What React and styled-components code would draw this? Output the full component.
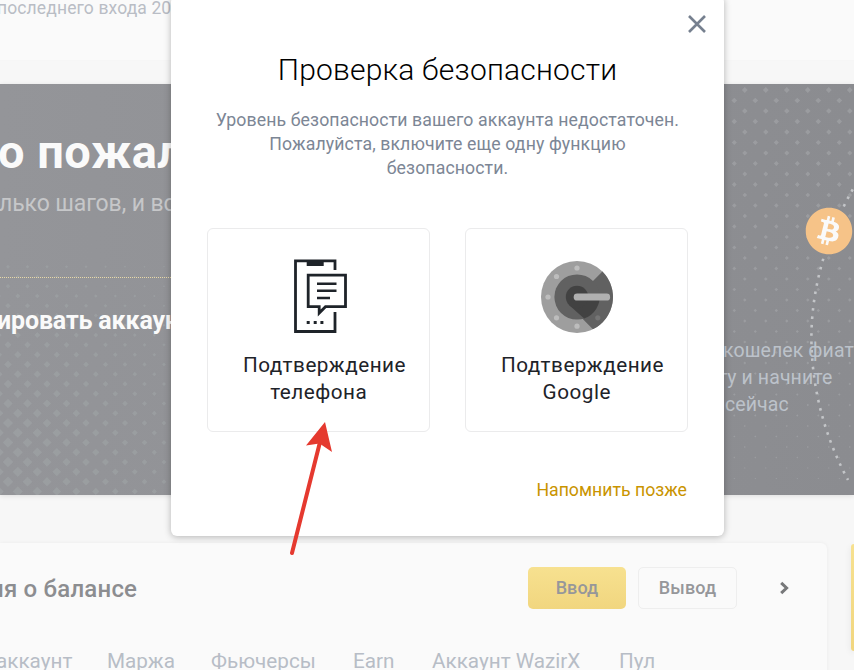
import React from "react";
import styled, { createGlobalStyle } from "styled-components";
import { FaBitcoin } from "react-icons/fa";

const tabs = [
  { name: "аккаунт", width: 74 },
  { name: "Маржа", width: 67 },
  { name: "Фьючерсы", width: 105 },
  { name: "Earn", width: 42 },
  { name: "Аккаунт WazirX", width: 150 },
  { name: "Пул", width: 36 },
];

const diamond = (x, y, r) => `M${x - r} ${y}l${r} ${-r}l${r} ${r}l${-r} ${r}z`;

const leftDiamonds = () => {
  let d = "";
  for (let row = 0; row < 24; row++) {
    const y = 182.7 + row * 9.77;
    for (let col = 0; col < 10; col++) {
      const x = (row % 2 ? -1.7 : 8) + col * 19.5;
      const ty = Math.min(1, row / 17);
      const r = (2 + 3.4 * ty) * (1 - (0.55 * x) / 165);
      d += diamond(x, y, Math.max(r, 0.8));
    }
  }
  return d;
};

const rightDiamonds = () => {
  let d = "";
  for (let row = 0; row < 38; row++) {
    const y = 6 + row * 10.5;
    for (let col = 0; col < 7; col++) {
      const x = (row % 2 ? 10.3 : 20.8) + col * 21;
      d += diamond(x, y, 2.9 - row * 0.057);
    }
  }
  return d;
};

const PhoneIcon = () => (
  <svg width="54" height="75" viewBox="0 0 54 75" fill="none" stroke="#1e2329" strokeWidth="2.8">
    <path d="M41 11V1.8H1.5V72.5H41V53" />
    <path d="M12.7 1h17v6h-17z" fill="#1e2329" stroke="none" />
    <path d="M14.2 16.2H51.5V47.7H31.5L25.2 54V47.7H14.2z" />
    <path d="M23 24.7H42.5M23 31.7H42.5M23 39H36" strokeWidth="2.6" />
    <path d="M12.7 62h3v3h-3zM19.7 62h3v3h-3zM26.4 62h3v3h-3z" fill="#1e2329" stroke="none" />
  </svg>
);

const AuthenticatorIcon = () => (
  <svg width="72" height="72" viewBox="-36 -36 72 72">
    <circle r="36" fill="#9e9e9e" />
    <path d="M25.4 -25.5L16 -16L0 0L-8 8L15.9 32.3A36 36 0 0 0 25.4 -25.5z" fill="#616161" />
    <circle r="22.6" fill="#616161" />
    <path d="M11 -3H22.4A22.6 22.6 0 0 1 7.1 21.5L-8 8z" fill="#424242" />
    <circle r="11.2" fill="#424242" />
    <rect x="-3.3" y="-3.4" width="36.4" height="7" rx="3.4" fill="#b0b0b0" />
    <g fill="#bdbdbd">
      <circle cy="-29" r="2.6" />
      <circle cx="-20.5" cy="-20.5" r="2.6" />
      <circle cx="-29" r="2.6" />
      <circle cx="-20.5" cy="20.8" r="2.6" />
      <circle cy="29.2" r="2.6" />
    </g>
    <circle cx="20.8" cy="20.8" r="2.6" fill="#757575" />
  </svg>
);

const App = () => {
  return (
    <>
      <GlobalStyle />
      <Page>
        <TopBar>
          <LastLogin>последнего входа 20</LastLogin>
        </TopBar>
        <Banner>
          <BannerPattern width="171" height="411">
            <path d={leftDiamonds()} fill="#a1a6a8" fillOpacity="0.55" />
          </BannerPattern>
          <RightPattern width="130" height="411">
            <path d={rightDiamonds()} fill="#a5a6aa" fillOpacity="0.6" />
            <path
              d="M133 98C102 150 87 206 87.4 256C88 306 101 353 124 396"
              fill="none"
              stroke="#c3c5c8"
              strokeWidth="2.6"
              strokeDasharray="2.6 5.8"
            />
          </RightPattern>
          <Coin>
            <FaBitcoin size={48} />
          </Coin>
          <BannerMain>
            <BannerTitle>о пожал</BannerTitle>
            <BannerText>лько шагов, и вс</BannerText>
            <Divider />
            <BannerStep>ировать аккаун</BannerStep>
          </BannerMain>
          <BannerSide>
            <SideLine>кошелек фиат</SideLine>
            <SideLine $shift={-4}>гу и начните</SideLine>
            <SideLine $shift={2}>сейчас</SideLine>
          </BannerSide>
        </Banner>
        <Bottom>
          <Balance>
            <BalanceHead>
              <BalanceTitle>ия о балансе</BalanceTitle>
              <Button $primary $width={98}>
                Ввод
              </Button>
              <Button $width={99}>Вывод</Button>
              <Chevron width="10" height="14" viewBox="0 0 10 14">
                <path d="M2.2 1.8L7.6 7L2.2 12.2" fill="none" stroke="#77787a" strokeWidth="3" />
              </Chevron>
            </BalanceHead>
            <Tabs>
              {tabs.map((tab) => (
                <Tab key={tab.name} $width={tab.width}>
                  {tab.name}
                </Tab>
              ))}
            </Tabs>
          </Balance>
          <SideCard />
        </Bottom>

        <Overlay>
          <Modal>
            <Close width="18" height="18" viewBox="0 0 18 18">
              <path d="M1 1L17 17M17 1L1 17" stroke="#76808f" strokeWidth="2.6" />
            </Close>
            <Title>Проверка безопасности</Title>
            <Description>
              <span>Уровень безопасности вашего аккаунта недостаточен.</span>
              <span>Пожалуйста, включите еще одну функцию</span>
              <span>безопасности.</span>
            </Description>
            <Options>
              <Option>
                <IconBox $nudge={5}>
                  <PhoneIcon />
                </IconBox>
                <Label>Подтверждение телефона</Label>
              </Option>
              <Option>
                <IconBox $nudge={1}>
                  <AuthenticatorIcon />
                </IconBox>
                <Label>Подтверждение Google</Label>
              </Option>
            </Options>
            <Later>Напомнить позже</Later>
          </Modal>
        </Overlay>

        <Arrow width="50" height="140" viewBox="0 0 50 140">
          <path d="M7 133L35 22" stroke="#e5392f" strokeWidth="4" strokeLinecap="round" />
          <path d="M40 2L21 25.5L34.5 23.5L47 32z" fill="#e5392f" />
        </Arrow>
      </Page>
    </>
  );
};

const GlobalStyle = createGlobalStyle`
  * {
    box-sizing: border-box;
  }
  body {
    margin: 0;
    font-family: Roboto, "Noto Sans", sans-serif;
  }
`;

const Page = styled.div`
  position: relative;
  width: 854px;
  height: 670px;
  overflow: hidden;
  background: #f7f7f7;
  white-space: nowrap;
`;

const TopBar = styled.header`
  height: 61px;
  background: #fafafa;
  border-bottom: 1px solid #f6f6f6;
`;

const LastLogin = styled.div`
  margin-left: -3px;
  font-size: 17.5px;
  line-height: 16px;
  letter-spacing: 0.12px;
  color: #b9bdc5;
`;

const Banner = styled.section`
  position: relative;
  display: flex;
  justify-content: space-between;
  height: 411px;
  margin-top: 23px;
  background: linear-gradient(90deg, #949599, #8b8c90);
  box-shadow: 0 1px 5px rgba(0, 0, 0, 0.1);
`;

const BannerPattern = styled.svg`
  position: absolute;
  left: 0;
  top: 0;
`;

const RightPattern = styled(BannerPattern)`
  left: 724px;
`;

const Coin = styled.div`
  position: absolute;
  left: 805px;
  top: 123px;
  width: 48px;
  height: 48px;
  border-radius: 50%;
  background: radial-gradient(#fafafa 60%, transparent 61%);
  color: #f6c388;
  z-index: 1;
`;

const BannerMain = styled.div`
  position: relative;
  width: 171px;
  padding-top: 40px;
`;

const BannerTitle = styled.h1`
  margin: 0 0 0 -2px;
  font-size: 47px;
  line-height: 56px;
  font-weight: 700;
  letter-spacing: 0.5px;
  color: #fafafa;
`;

const BannerText = styled.p`
  margin: 9px 0 0 -1px;
  font-size: 23px;
  line-height: 30px;
  letter-spacing: -0.1px;
  color: #c6c7c9;
`;

const Divider = styled.div`
  margin-top: 58px;
  border-top: 1px dotted #e8d9a8;
`;

const BannerStep = styled.div`
  margin: 28px 0 0 -3px;
  font-size: 25px;
  line-height: 30px;
  font-weight: 700;
  letter-spacing: -0.15px;
  color: #fafafa;
`;

const BannerSide = styled.div`
  position: relative;
  width: 131px;
  padding-top: 253px;
`;

const SideLine = styled.div`
  margin-left: ${(props) => props.$shift || 0}px;
  font-size: 19.5px;
  line-height: 27px;
  letter-spacing: 0.1px;
  color: #bcc2ca;
`;

const Bottom = styled.div`
  display: flex;
  justify-content: space-between;
  align-items: flex-start;
  margin-top: 48px;
`;

const Balance = styled.section`
  width: 827px;
  height: 140px;
  border-radius: 0 6px 0 0;
  background: #fafafa;
  box-shadow: 0 0 4px rgba(0, 0, 0, 0.05);
`;

const BalanceHead = styled.div`
  display: flex;
  align-items: center;
  gap: 12px;
  height: 66px;
  padding: 24px 38px 0 0;
`;

const BalanceTitle = styled.h2`
  flex: 1;
  margin: 2px 0 0 -10px;
  font-size: 24px;
  line-height: 42px;
  font-weight: 500;
  letter-spacing: 0.2px;
  color: #8c8d90;
`;

const Button = styled.button`
  width: ${(props) => props.$width}px;
  height: 42px;
  padding: 0;
  border: ${(props) => (props.$primary ? "none" : "1px solid #eeeeee")};
  border-radius: 5px;
  background: ${(props) => (props.$primary ? "linear-gradient(#f7e190, #f1d67f)" : "transparent")};
  font-family: inherit;
  font-size: 18px;
  line-height: 38px;
  font-weight: 500;
  letter-spacing: 0.1px;
  color: #96979a;
`;

const Chevron = styled.svg`
  margin-left: 30px;
`;

const Tabs = styled.div`
  display: flex;
  gap: 37px;
  margin: 38px 0 0 -4px;
`;

const Tab = styled.div`
  width: ${(props) => props.$width}px;
  font-size: 20.7px;
  line-height: 28px;
  color: #b7bdc6;
`;

const SideCard = styled.aside`
  width: 3px;
  height: 107px;
  margin-top: 1px;
  border-radius: 6px 0 0 6px;
  background: linear-gradient(#f7e190, #f1d67f);
  box-shadow: 0 2px 6px rgba(0, 0, 0, 0.1);
`;

const Overlay = styled.div`
  position: absolute;
  inset: 0;
  z-index: 2;
  display: flex;
  align-items: flex-start;
  padding-left: 171px;
`;

const Modal = styled.div`
  position: relative;
  width: 553px;
  height: 540px;
  margin-top: -4px;
  padding: 54px 36px 0;
  border-radius: 6px;
  background: #ffffff;
  box-shadow: 0 1px 7px rgba(0, 0, 0, 0.28);
`;

const Close = styled.svg`
  position: absolute;
  top: 19px;
  right: 18px;
`;

const Title = styled.h2`
  margin: 0;
  font-size: 30px;
  line-height: 40px;
  font-weight: 300;
  letter-spacing: 0.2px;
  text-align: center;
  color: #000000;
`;

const Description = styled.p`
  display: flex;
  flex-direction: column;
  align-items: center;
  margin: 18px 0 0;
  font-size: 17.7px;
  line-height: 24px;
  letter-spacing: 0.11px;
  color: #7c8695;
`;

const Options = styled.div`
  display: flex;
  gap: 35.5px;
  margin-top: 48px;
`;

const Option = styled.div`
  width: 222.5px;
  height: 204px;
  padding-top: 30px;
  border: 1px solid #ebebec;
  border-radius: 6px;
`;

const IconBox = styled.div`
  display: flex;
  align-items: center;
  justify-content: center;
  height: 75px;
  padding-left: ${(props) => props.$nudge}px;
`;

const Label = styled.div`
  margin-top: 18px;
  padding: 0 34px 0 35px;
  font-size: 20.7px;
  line-height: 27px;
  letter-spacing: 0.5px;
  text-align: center;
  white-space: normal;
  color: #1e2329;
`;

const Later = styled.div`
  margin-top: 46px;
  padding-right: 1px;
  font-size: 17.7px;
  line-height: 24px;
  text-align: right;
  color: #c99400;
`;

const Arrow = styled.svg`
  position: absolute;
  left: 285px;
  top: 420px;
  z-index: 3;
`;

export default App;
